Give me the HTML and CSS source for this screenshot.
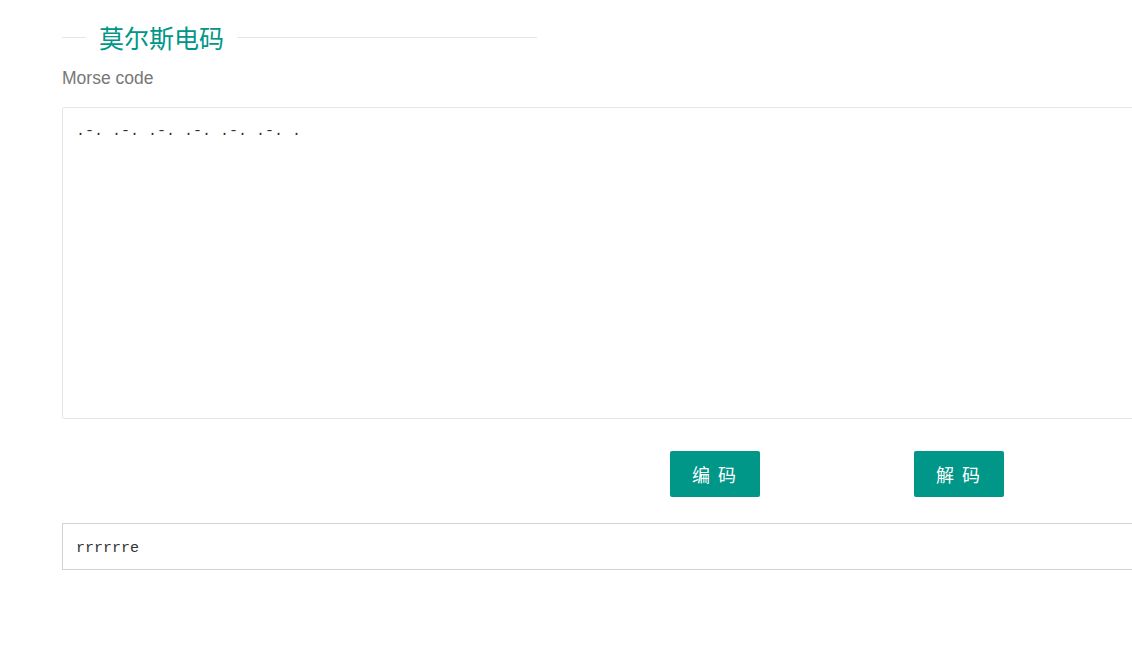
FILE: index.html
```html
<!DOCTYPE html>
<html lang="zh-CN">
<head>
    <meta charset="UTF-8">
    <title>莫尔斯电码</title>
    <link rel="stylesheet" href="styles.css">
</head>
<body>
    <div class="page">
        <fieldset class="title-field">
            <legend>莫尔斯电码</legend>
        </fieldset>

        <div class="label">Morse code</div>

        <textarea class="code-area">.-. .-. .-. .-. .-. .-. .</textarea>

        <div class="actions">
            <button class="btn">编 码</button>
            <button class="btn">解 码</button>
        </div>

        <input class="plain-input" type="text" value="rrrrrre">
    </div>
</body>
</html>
```

FILE: styles.css
```css
* {
    margin: 0;
    padding: 0;
    box-sizing: border-box;
}

body {
    font-family: "Liberation Sans", "Noto Sans CJK SC", Arial, sans-serif;
    background: #fff;
    color: #333;
    overflow: hidden;
}

.page {
    width: 1300px;
    padding: 0 0 0 62px;
}

.title-field {
    width: 475px;
    border: none;
    border-top: 1px solid #e6e6e6;
    margin-top: 19px;
}

.title-field legend {
    margin-left: 24px;
    padding: 0 13px;
    font-family: "Noto Sans CJK SC", sans-serif;
    font-size: 25px;
    font-weight: 400;
    line-height: 36px;
    color: #009688;
}

.label {
    margin-top: 12px;
    font-size: 17.5px;
    line-height: 22px;
    color: #777;
}

.code-area {
    display: block;
    width: 1238px;
    height: 312px;
    margin-top: 18px;
    padding: 13px 13px 11px;
    border: 1px solid #e6e6e6;
    border-radius: 2px;
    resize: none;
    outline: none;
    font-family: "Liberation Mono", "Courier New", monospace;
    font-size: 15px;
    line-height: 22px;
    color: #333;
}

.actions {
    display: flex;
    gap: 154px;
    padding-left: 608px;
    margin-top: 32px;
}

.btn {
    width: 90px;
    height: 46px;
    background: #009688;
    color: #fff;
    border: none;
    border-radius: 2px;
    font-family: "Noto Sans CJK SC", sans-serif;
    font-size: 18px;
    letter-spacing: 2px;
    cursor: pointer;
}

.plain-input {
    display: block;
    width: 1238px;
    height: 47px;
    margin-top: 26px;
    padding: 4px 13px 0;
    border: 1px solid #d2d2d2;
    outline: none;
    font-family: "Liberation Mono", "Courier New", monospace;
    font-size: 15px;
    color: #333;
}
```
